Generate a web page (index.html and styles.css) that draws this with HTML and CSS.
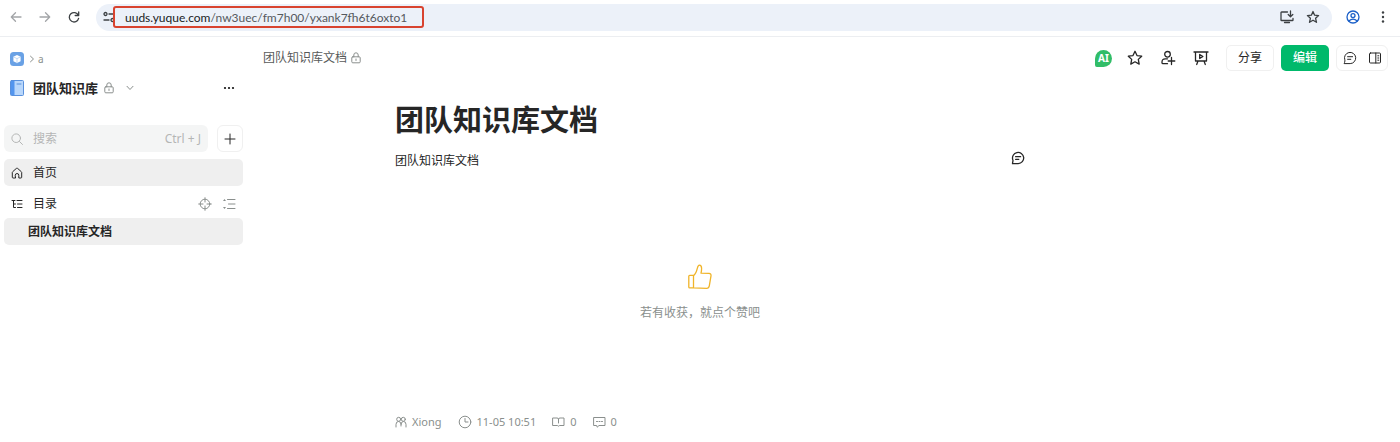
FILE: index.html
```html
<!DOCTYPE html>
<html lang="zh-CN">
<head>
<meta charset="utf-8">
<meta name="viewport" content="width=device-width, initial-scale=1">
<title>团队知识库文档</title>
<link rel="stylesheet" href="styles.css">
</head>
<body>
<header class="browser">
  <button class="nav-btn muted" aria-label="Back"><svg class="bold" width="12" height="12" viewBox="0 0 12 12"><path d="M11 6H1.500M5.500 1.700L1.300 6 5.500 10.300"/></svg></button>
  <button class="nav-btn muted" aria-label="Forward"><svg class="bold" width="12" height="12" viewBox="0 0 12 12"><path d="M1 6h9.500M6.500 1.700L10.700 6 6.500 10.300"/></svg></button>
  <button class="nav-btn" aria-label="Reload"><svg class="bold" width="12" height="12" viewBox="0 0 12 12"><path d="M10.300 4.300A4.700 4.700 0 1 0 10.600 7.300M10.700 1v3.500H7.200"/></svg></button>
  <div class="omnibox">
    <svg class="bold" width="12" height="12" viewBox="0 0 12 12"><circle cx="2.500" cy="3" r="1.500"/><path d="M6 3h5M1 9h5"/><circle cx="9.500" cy="9" r="1.500"/></svg>
    <div class="address"><span class="host">uuds.yuque.com</span>/nw3uec/fm7h00/yxank7fh6t6oxto1</div>
    <button class="nav-btn end" aria-label="Install"><svg class="bold" width="14" height="14" viewBox="0 0 14 14"><path d="M7.500 2H1.600Q1 2 1 2.600v7.300q0 .6.600.6h10.800q.6 0 .6-.6V8.500M4.500 12.500h5M10.500 1v5.500M8.200 4.500l2.300 2.300 2.300-2.300"/></svg></button>
    <button class="nav-btn" aria-label="Bookmark"><svg class="bold" width="14" height="14" viewBox="0 0 14 14"><path d="M7 1.500l1.600 3.700 4 .4-3 2.700.9 4L7 10.200l-3.500 2.100.9-4-3-2.700 4-.4z"/></svg></button>
  </div>
  <button class="nav-btn profile" aria-label="Profile"><svg class="bold" width="14" height="14" viewBox="0 0 14 14"><circle cx="7" cy="7" r="6"/><circle cx="7" cy="5.600" r="2"/><path d="M2.800 11Q7 7.400 11.200 11"/></svg></button>
  <button class="nav-btn" aria-label="Menu"><svg width="12" height="14" viewBox="0 0 12 14"><g class="dot"><circle cx="6" cy="2.500" r="1.200"/><circle cx="6" cy="7" r="1.200"/><circle cx="6" cy="11.500" r="1.200"/></g></svg></button>
</header>

<div class="app">
  <aside class="sidebar">
    <nav class="crumbs" aria-label="Breadcrumb">
      <svg width="14" height="14" viewBox="0 0 14 14"><rect width="14" height="14" rx="3.500" fill="#69a1e5" stroke="none"/><path d="M7 3l3.600 1.800v4.400L7 11 3.400 9.200V4.800z" fill="#fff" stroke="none"/><path d="M3.700 5L7 6.600 10.300 5M7 6.600V11" stroke="#a9caf2" stroke-width=".7"/></svg>
      <svg class="crumb-arrow" width="6" height="8" viewBox="0 0 6 8"><path d="M1.500 1.200L4.500 4 1.500 6.800"/></svg>
      <a href="#">a</a>
    </nav>
    <div class="book">
      <svg width="14" height="16" viewBox="0 0 14 16"><rect x=".5" y=".5" width="13" height="15" rx="1" fill="#b9d7fb" stroke="#5990dc"/><path d="M1 1h3.500v14H1z" fill="#5395ee" stroke="none"/><path d="M7 4h4" stroke="#5990dc"/></svg>
      <strong>团队知识库</strong>
      <svg class="gray" width="10" height="12" viewBox="0 0 10 12"><rect x=".8" y="4.800" width="8.400" height="6" rx="1"/><path d="M2.800 4.800V3a2.200 2.200 0 0 1 4.400 0v1.800M5 7v1.500"/></svg>
      <button class="nav-btn gray" aria-label="Expand"><svg width="8" height="6" viewBox="0 0 8 6"><path d="M1 1.300L4 4.500 7 1.300"/></svg></button>
      <button class="nav-btn end" aria-label="More"><svg width="14" height="6" viewBox="0 0 14 6"><g class="dot black"><circle cx="3" cy="3" r="1.100"/><circle cx="7" cy="3" r="1.100"/><circle cx="11" cy="3" r="1.100"/></g></svg></button>
    </div>
    <div class="search-row">
      <label class="search">
        <svg width="12" height="12" viewBox="0 0 12 12"><circle cx="5.200" cy="5.200" r="4.300"/><path d="M8.500 8.500l3 3"/></svg>
        <input type="text" placeholder="搜索" aria-label="搜索">
        <span>Ctrl + J</span>
      </label>
      <button class="outline add" aria-label="New"><svg width="12" height="12" viewBox="0 0 12 12"><path d="M6 1v10M1 6h10"/></svg></button>
    </div>
    <a class="item active" href="#"><svg width="12" height="12" viewBox="0 0 12 12"><path d="M4.200 11H2.100q-.8 0-.8-.8V5.500q0-.5.400-.8L5.400 1.400q.6-.5 1.200 0l3.700 3.300q.4.300.4.800v4.700q0 .8-.8.800H7.800V8.300a1.800 1.800 0 0 0-3.600 0z"/></svg>首页</a>
    <div class="item toc"><svg width="12" height="12" viewBox="0 0 12 12"><path d="M1 2.500h3M2.500 2.500v7h2M2.500 6h2M6 2.500h5M6.500 6H11M6.500 9.500H11"/></svg>目录
      <button class="nav-btn gray end" aria-label="Locate"><svg width="14" height="14" viewBox="0 0 14 14"><circle cx="7" cy="7" r="4.800"/><path d="M7 .7V5M7 9v4.300M.7 7H5M9 7h4.300"/></svg></button>
      <button class="nav-btn gray" aria-label="Collapse"><svg width="14" height="14" viewBox="0 0 14 14"><path d="M5.500 2.500H13M6.500 7H13M5.500 11.500H13"/><path class="solid" d="M1 4l1.500-2L4 4zM1 10l1.500 2L4 10z"/></svg></button>
    </div>
    <a class="item doc active" href="#">团队知识库文档</a>
  </aside>

  <main class="main">
    <div class="toolbar">
      <span class="doc-name">团队知识库文档</span>
      <svg class="gray" width="10" height="12" viewBox="0 0 10 12"><rect x=".8" y="4.800" width="8.400" height="6" rx="1"/><path d="M2.800 4.800V3a2.200 2.200 0 0 1 4.400 0v1.800M5 7v1.500"/></svg>
      <div class="actions">
        <button class="ai">AI</button>
        <button class="nav-btn" aria-label="Favorite"><svg class="bold" width="16" height="16" viewBox="0 0 16 16"><path d="M8 1.300l2 4.300 4.700.6-3.400 3.200.9 4.700L8 11.800l-4.200 2.300.9-4.700L1.300 6.200 6 5.600z"/></svg></button>
        <button class="nav-btn" aria-label="Invite"><svg class="bold" width="16" height="16" viewBox="0 0 16 16"><circle cx="7.500" cy="4.300" r="2.800"/><path d="M7.500 8.800H5.200Q2 8.800 2 12v.7q0 1 1 1h4.500M11.500 7.500v7M8.200 11h6.600"/></svg></button>
        <button class="nav-btn" aria-label="Present"><svg class="bold" width="16" height="16" viewBox="0 0 16 16"><path d="M1 2h14M2.500 2v9h11V2M5 11l-1.300 3.500M11 11l1.300 3.500M6.700 4.500l3.200 2-3.200 2z"/></svg></button>
        <button class="outline text-btn">分享</button>
        <button class="text-btn primary">编辑</button>
        <div class="outline group">
          <button class="nav-btn" aria-label="Comments"><svg width="14" height="14" viewBox="0 0 14 14"><path d="M1.500 12.600h5.700a5.600 5.600 0 1 0-5.400-3.800q.4 1-.1 2.300zM4.600 5.700h5M4.600 8.300h3.200"/></svg></button>
          <button class="nav-btn" aria-label="Side panel"><svg width="14" height="14" viewBox="0 0 14 14"><rect x="1.500" y="2" width="11" height="10" rx="1"/><path d="M7.800 2v10M9.800 4.800h1M9.800 7h1M9.800 9.200h1"/></svg></button>
        </div>
      </div>
    </div>

    <div class="page">
      <article class="article">
        <h1>团队知识库文档</h1>
        <p>团队知识库文档</p>
        <div class="like">
          <button class="nav-btn" aria-label="Like"><svg class="bold" width="26" height="26" viewBox="0 0 26 26"><path d="M1.800 12.300q0-.9.900-.9h3.800v12.400H2.700q-.9 0-.9-.9zM6.500 11.600c2-1.300 3-3.800 3.800-7.200.5-2.100.9-3.200 2.100-3.200 1.700 0 2.200 1.500 2.200 3.300 0 1.700-.2 3-.6 4.600l8 .3c1.600.1 2.200 1.200 2 2.500l-1.700 10c-.3 1.600-1.100 2.500-2.600 2.500l-13.200-.6"/></svg></button>
          <span>若有收获，就点个赞吧</span>
        </div>
        <footer class="meta">
          <span><svg width="12" height="12" viewBox="0 0 12 12"><circle cx="3.700" cy="3.300" r="2"/><circle cx="8.300" cy="3.300" r="2"/><path d="M1 11V8.500Q1 5.500 3.500 5.500T6 8.500V10M6 8.500Q6 5.500 8.500 5.500T11 8.500V11"/></svg>Xiong</span>
          <span><svg width="14" height="14" viewBox="0 0 14 14"><circle cx="7" cy="7" r="5.800"/><path d="M7 3.500V7h3"/></svg>11-05 10:51</span>
          <span><svg width="13" height="12" viewBox="0 0 13 12"><path d="M1 2h4q1.500 0 1.500 1.300Q6.500 2 8 2h4v7.500H7.800q-.8 0-1.300.7-.5-.7-1.300-.7H1zM6.500 3.300V7"/></svg>0</span>
          <span><svg width="13" height="12" viewBox="0 0 13 12"><path d="M1 1.500h11v8H6l-1.800 1.700L3.700 9.500H1zM3.500 5.500h1M6 5.500h1M8.500 5.500h1"/></svg>0</span>
        </footer>
      </article>
      <button class="nav-btn note" aria-label="Comment"><svg class="bold" width="14" height="14" viewBox="0 0 14 14"><path d="M1.500 12.600h5.700a5.600 5.600 0 1 0-5.400-3.800q.4 1-.1 2.300zM4.600 5.700h5M4.600 8.300h3.200"/></svg></button>
    </div>
  </main>
</div>
</body>
</html>
```
FILE: styles.css
```css
* { box-sizing: border-box; }
body {
  margin: 0;
  background: #fff;
  color: #262626;
  font: 12px/18px "Noto Sans", "Noto Sans CJK SC", sans-serif;
}
a { color: inherit; text-decoration: none; }
button, input { font: inherit; color: inherit; }
button { padding: 0; border: 0; background: none; }
svg {
  display: block;
  flex: none;
  fill: none;
  stroke: currentColor;
  stroke-width: 1;
  stroke-linejoin: round;
  stroke-linecap: round;
}
.bold { stroke-width: 1.3; }
.dot, .solid { fill: currentColor; stroke: none; }
.black { color: #111; }
.gray { color: #8a8f8d; }
.nav-btn { display: flex; align-items: center; justify-content: center; }
.end { margin-left: auto; }

.browser {
  display: flex;
  align-items: center;
  gap: 17px;
  height: 37px;
  padding: 0 11px 2px 10px;
  border-bottom: 1px solid #eceef1;
  color: #3c4043;
}
.muted { color: #a3a5a8; }
.omnibox {
  display: flex;
  align-items: center;
  flex: 1;
  gap: 12px;
  height: 27px;
  margin: 0 -3px 0 -1px;
  padding: 0 12px 0 7px;
  border-radius: 14px;
  background: #ecf1f9;
}
.address {
  height: 22px;
  margin-left: -14px;
  padding: 0 15px 0 10px;
  border: 2px solid #d8432f;
  border-radius: 3px;
  background: #ecf1f9;
  color: #55595e;
  font: 12px/19px Lato, "Noto Sans", sans-serif;
  white-space: nowrap;
}
.host { color: #202124; }
.profile { color: #1a5fc8; }

.app { display: flex; }
.sidebar { width: 248px; flex: none; padding: 13px 5px 0 4px; }
.crumbs {
  display: flex;
  align-items: center;
  gap: 5px;
  padding-left: 6px;
  color: #8a8f8d;
  font-size: 10px;
}
.crumb-arrow { margin-right: -2px; }
.book {
  display: flex;
  align-items: center;
  gap: 6px;
  height: 20px;
  margin-top: 10px;
  padding: 0 7px 0 6px;
}
.book strong { margin-left: 3px; font-size: 13px; }
.book .nav-btn { margin-left: 6px; }
.book .end { margin-left: auto; }
.search-row { display: flex; gap: 9px; margin-top: 27px; }
.search {
  display: flex;
  align-items: center;
  gap: 10px;
  flex: 1;
  min-width: 0;
  height: 27px;
  padding: 0 7px;
  border-radius: 6px;
  background: #f4f5f5;
  color: #b4b6b5;
}
.search input {
  flex: 1;
  min-width: 0;
  padding: 0;
  border: 0;
  outline: 0;
  background: none;
}
.search input::placeholder { color: #b4b6b5; opacity: 1; }
.outline { border: 1px solid #f0f0f0; border-radius: 6px; }
.add { display: grid; place-items: center; width: 26px; height: 27px; }
.item {
  display: flex;
  align-items: center;
  gap: 10px;
  height: 27px;
  padding: 0 7px;
  border-radius: 5px;
}
.active { background: #efefef; }
.search-row + .item { margin-top: 7px; }
.toc { margin: 4px 0 1px; }
.doc { padding-left: 24px; font-weight: 700; }

.main { flex: 1; min-width: 0; }
.toolbar {
  display: flex;
  align-items: center;
  gap: 4px;
  height: 42px;
  padding: 0 12px 0 15px;
}
.doc-name { color: #585a5a; }
.actions { display: flex; align-items: center; gap: 7px; margin-left: auto; }
.actions > .nav-btn { width: 26px; }
.ai {
  width: 17px;
  height: 17px;
  margin-right: 3px;
  border-radius: 9px 9px 9px 2px;
  background: #31bd68;
  color: #fff;
  font: 700 10px/17px "Noto Sans", sans-serif;
}
.text-btn { width: 48px; height: 26px; border-radius: 5px; }
.actions .outline { margin-left: 5px; }
.primary { background: #00b96b; color: #fff; font-weight: 500; }
.actions .group {
  display: flex;
  justify-content: space-around;
  align-items: center;
  width: 52px;
  height: 26px;
  margin-left: 0;
}
.page { display: flex; padding-left: 147px; }
.article { width: 610px; }
h1 { margin: 21px 0 0; font-size: 29px; line-height: 40px; }
p { margin: 12px 0 0; }
.like {
  display: flex;
  flex-direction: column;
  align-items: center;
  gap: 14px;
  margin-top: 94px;
  color: #8a8f8d;
}
.like .nav-btn { color: #f0b429; }
.meta {
  display: flex;
  gap: 16px;
  margin-top: 91px;
  color: #8a8f8d;
  font-size: 11px;
}
.meta span { display: flex; align-items: center; gap: 5px; }
.note { align-self: flex-start; margin: 72px 0 0 6px; }
```
